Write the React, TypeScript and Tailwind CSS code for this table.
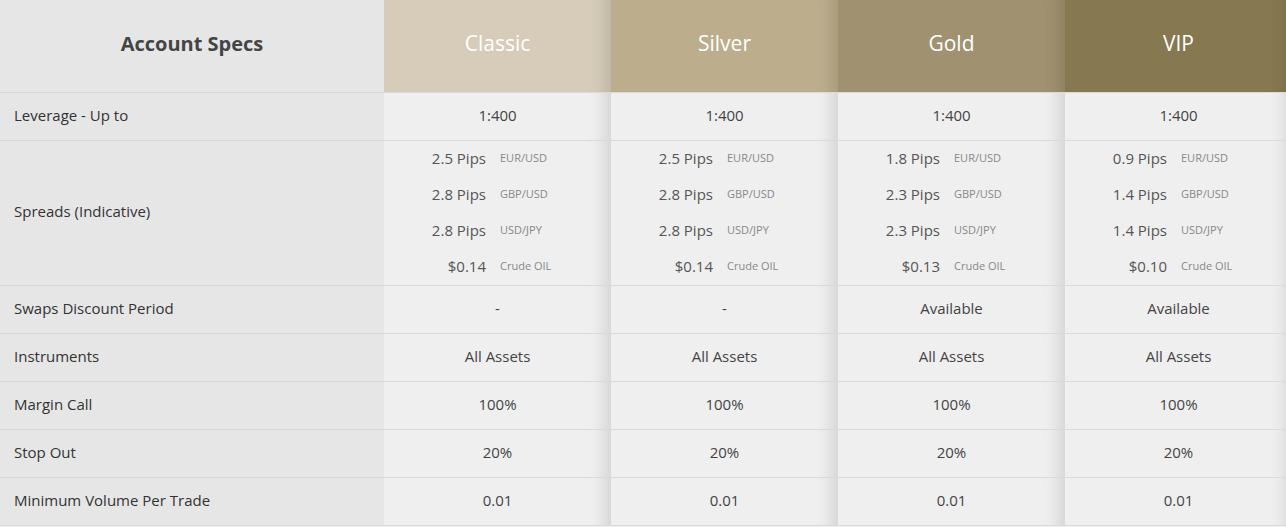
import React from "react"

const tiers = [
    { name: "Classic", bg: "bg-[#d6ccb9]" },
    { name: "Silver", bg: "bg-[#bcae8d]" },
    { name: "Gold", bg: "bg-[#a09170]" },
    { name: "VIP", bg: "bg-[#867850]" },
]

const spreads = [
    [["2.5 Pips", "EUR/USD"], ["2.8 Pips", "GBP/USD"], ["2.8 Pips", "USD/JPY"], ["$0.14", "Crude OIL"]],
    [["2.5 Pips", "EUR/USD"], ["2.8 Pips", "GBP/USD"], ["2.8 Pips", "USD/JPY"], ["$0.14", "Crude OIL"]],
    [["1.8 Pips", "EUR/USD"], ["2.3 Pips", "GBP/USD"], ["2.3 Pips", "USD/JPY"], ["$0.13", "Crude OIL"]],
    [["0.9 Pips", "EUR/USD"], ["1.4 Pips", "GBP/USD"], ["1.4 Pips", "USD/JPY"], ["$0.10", "Crude OIL"]],
]

const rows: [string, string[]][] = [
    ["Swaps Discount Period", ["-", "-", "Available", "Available"]],
    ["Instruments", ["All Assets", "All Assets", "All Assets", "All Assets"]],
    ["Margin Call", ["100%", "100%", "100%", "100%"]],
    ["Stop Out", ["20%", "20%", "20%", "20%"]],
    ["Minimum Volume Per Trade", ["0.01", "0.01", "0.01", "0.01"]],
]

// soft shadow on the right edge of each tier column
const shade = "shadow-[inset_-20px_0_16px_-14px_rgba(0,0,0,0.12)]"

function Label({ text }: { text: string }) {
    return <div className="flex items-center pl-[14px] pb-[3px] bg-[#e6e6e6] text-[15px] text-[#333]">{text}</div>
}

function Cell({ text }: { text: string }) {
    return <div className={`flex items-center justify-center pb-[3px] bg-[#efefef] text-[15px] text-[#444] ${shade}`}>{text}</div>
}

export default function App() {
    return (
        <div className="w-[1286px] h-[527px] overflow-hidden bg-[#efefef]" style={{ fontFamily: "'Open Sans', Lato, sans-serif" }}>
            <div className="w-[1292px]">
                <div className="grid grid-cols-[384px_repeat(4,227px)] h-[93px] border-b border-[#dadada]">
                    <div className="flex items-center justify-center pb-[4px] bg-[#e6e6e6] text-[20px] font-bold text-[#444]">Account Specs</div>
                    {tiers.map(t => (
                        <div key={t.name} className={`flex items-center justify-center pb-[4px] text-[21px] text-white ${t.bg} ${shade}`}>{t.name}</div>
                    ))}
                </div>

                <div className="grid grid-cols-[384px_repeat(4,227px)] h-[48px] border-b border-[#dadada]">
                    <Label text="Leverage - Up to" />
                    {tiers.map(t => <Cell key={t.name} text="1:400" />)}
                </div>

                <div className="grid grid-cols-[384px_repeat(4,227px)] h-[145px] border-b border-[#dadada]">
                    <Label text="Spreads (Indicative)" />
                    {spreads.map((col, i) => (
                        <div key={i} className={`flex flex-col bg-[#efefef] ${shade}`}>
                            {col.map(([v, pair]) => (
                                <div key={pair} className="flex items-center h-[36px] pb-[2px]">
                                    <span className="w-[102px] text-right text-[15px] text-[#555]">{v}</span>
                                    <span className="ml-[14px] text-[11px] text-[#888]">{pair}</span>
                                </div>
                            ))}
                        </div>
                    ))}
                </div>

                {rows.map(([label, vals]) => (
                    <div key={label} className="grid grid-cols-[384px_repeat(4,227px)] h-[48px] border-b border-[#dadada]">
                        <Label text={label} />
                        {vals.map((v, i) => <Cell key={i} text={v} />)}
                    </div>
                ))}
            </div>
        </div>
    )
}
